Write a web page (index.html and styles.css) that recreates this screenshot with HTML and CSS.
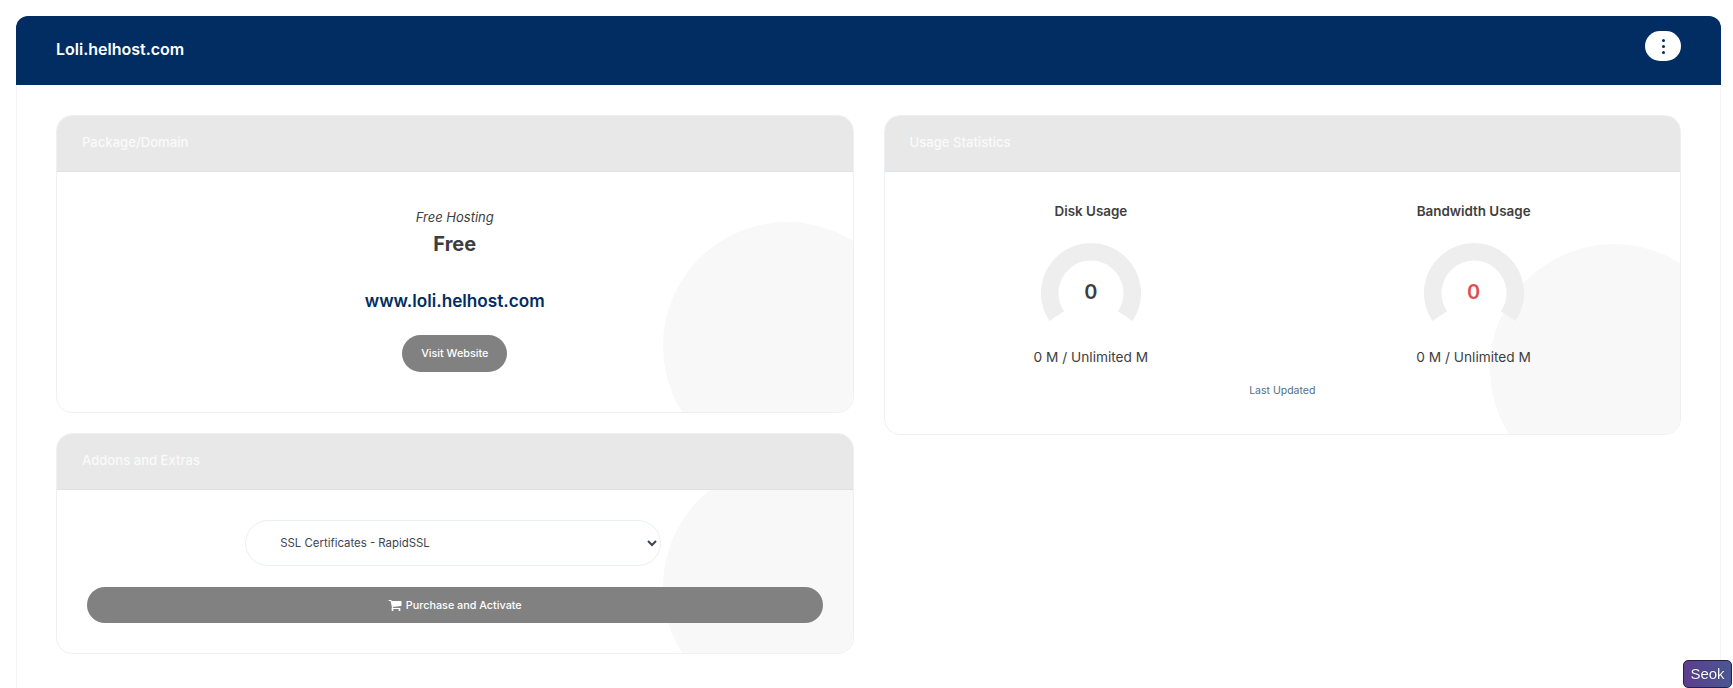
FILE: index.html
```html
<!DOCTYPE html>
<html lang="en">
<head>
<meta charset="utf-8">
<title>Loli.helhost.com</title>
<link rel="stylesheet" href="styles.css">
</head>
<body>
<main class="panel">
  <header class="panel-head">
    <h1 class="site-name">Loli.helhost.com</h1>
    <button class="more-btn" aria-label="More">
      <span class="dot"></span><span class="dot"></span><span class="dot"></span>
    </button>
  </header>
  <div class="panel-body">
    <div class="column">
      <section class="card card-package">
        <h2 class="card-title">Package/Domain</h2>
        <div class="card-content package">
          <em class="plan-group">Free Hosting</em>
          <strong class="plan-name">Free</strong>
          <a class="domain" href="#">www.loli.helhost.com</a>
          <a class="btn btn-visit" href="#">Visit Website</a>
        </div>
      </section>
      <section class="card card-addons">
        <h2 class="card-title">Addons and Extras</h2>
        <div class="card-content addons">
          <select class="addon-select">
            <option>SSL Certificates - RapidSSL</option>
          </select>
          <a class="btn btn-wide" href="#">
            <svg class="cart" viewBox="0 256 1792 1408" aria-hidden="true"><path d="M704 1536q0 52-38 90t-90 38-90-38-38-90 38-90 90-38 90 38 38 90zm896 0q0 52-38 90t-90 38-90-38-38-90 38-90 90-38 90 38 38 90zm128-1088v512q0 24-16.5 42.5t-40.5 21.5l-1044 122q13 60 13 70 0 16-24 64h920q26 0 45 19t19 45-19 45-45 19h-1024q-26 0-45-19t-19-45q0-11 8-31.5t16-36 21.5-40 15.5-29.5l-177-823h-204q-26 0-45-19t-19-45 19-45 45-19h256q16 0 28.5 6.5t19.5 15.5 13 24.5 8 26 5.5 29.5 4.5 26h1201q26 0 45 19t19 45z"/></svg>
            Purchase and Activate
          </a>
        </div>
      </section>
    </div>
    <div class="column">
      <section class="card card-usage">
        <h2 class="card-title">Usage Statistics</h2>
        <div class="card-content usage">
          <div class="stats">
            <div class="stat">
              <h3 class="stat-title">Disk Usage</h3>
              <div class="gauge">
                <svg viewBox="0 0 100 100" aria-hidden="true"><path class="gauge-track" d="M15.8 73.1A41.25 41.25 0 1 1 84.2 73.1"/></svg>
                <span class="gauge-value">0</span>
              </div>
              <p class="stat-text">0 M / Unlimited M</p>
            </div>
            <div class="stat">
              <h3 class="stat-title">Bandwidth Usage</h3>
              <div class="gauge">
                <svg viewBox="0 0 100 100" aria-hidden="true"><path class="gauge-track" d="M15.8 73.1A41.25 41.25 0 1 1 84.2 73.1"/></svg>
                <span class="gauge-value gauge-red">0</span>
              </div>
              <p class="stat-text">0 M / Unlimited M</p>
            </div>
          </div>
          <p class="updated">Last Updated</p>
        </div>
      </section>
    </div>
  </div>
</main>
<div class="badge">Seok</div>
</body>
</html>
```
FILE: styles.css
```css
* { box-sizing: border-box; }
html, body { height: 100%; overflow: hidden; }
body {
  margin: 0;
  padding: 16px 12px 0 16px;
  background: #fff;
  font-family: "Inter", "Liberation Sans", sans-serif;
  color: #3e3e3e;
}
.panel {
  border: 1px solid #f2f4f6;
  border-top: 0;
  border-radius: 12px 12px 0 0;
  min-height: 700px;
}
.panel-head {
  display: flex;
  align-items: flex-start;
  justify-content: space-between;
  height: 69px;
  margin: 0 -1px;
  padding: 15px 40px 0 40px;
  background: #012d62;
  border-radius: 12px 12px 0 0;
}
.site-name {
  margin: 8px 0 0;
  font-size: 16px;
  line-height: 20px;
  font-weight: 600;
  color: #fff;
}
.more-btn {
  display: flex;
  flex-direction: column;
  align-items: center;
  justify-content: center;
  gap: 3px;
  width: 36px;
  height: 30px;
  padding: 0;
  border: 0;
  border-radius: 15px;
  background: #fff;
}
.dot { width: 3px; height: 3px; border-radius: 50%; background: #012d62; }
.panel-body {
  display: grid;
  grid-template-columns: 1fr 1fr;
  gap: 30px;
  padding: 30px 39px 0;
  align-items: start;
}
.column { display: flex; flex-direction: column; gap: 20px; }
.card {
  position: relative;
  overflow: hidden;
  border: 1px solid #eef1f3;
  border-radius: 16px;
  background: #fff;
}
.card::after {
  content: "";
  position: absolute;
  right: -58px;
  bottom: -58px;
  width: 248px;
  height: 248px;
  border-radius: 50%;
  background: #f8f8f8;
}
.card-title {
  position: relative;
  z-index: 1;
  margin: 0;
  height: 56px;
  padding: 0 25px;
  line-height: 53px;
  font-size: 13.1px;
  font-weight: 500;
  color: #fafafa;
  background: #e8e8e8;
  border-bottom: 1px solid #dfe1e3;
}
.card-content { position: relative; z-index: 1; }
.package {
  height: 240px;
  padding-top: 35px;
  display: flex;
  flex-direction: column;
  align-items: center;
}
.plan-group { font-size: 13px; line-height: 20px; }
.plan-name { margin-top: 3px; font-size: 20px; line-height: 28px; font-weight: 700; }
.domain {
  margin-top: 31px;
  font-size: 17.2px;
  line-height: 24px;
  font-weight: 600;
  color: #012d62;
  text-decoration: none;
}
.btn {
  display: flex;
  align-items: center;
  justify-content: center;
  gap: 4px;
  height: 37px;
  border-radius: 19px;
  background: #818181;
  color: #fff;
  font-size: 10.8px;
  font-weight: 500;
  text-decoration: none;
}
.btn-visit { margin-top: 22px; width: 105px; }
.addons {
  height: 163px;
  padding: 30px 30px 0;
  display: flex;
  flex-direction: column;
  align-items: center;
}
.addon-select {
  width: 416px;
  height: 46px;
  margin-right: 3px;
  padding: 0 30px;
  border: 1px solid #e9eef3;
  border-radius: 23px;
  background: #fff;
  color: #3d4450;
  font-family: inherit;
  font-size: 11.4px;
}
.btn-wide { width: 100%; margin-top: 21px; height: 36px; }
.cart { width: 14px; height: 11px; fill: #fff; }
.usage { height: 262px; padding-top: 29px; }
.stats { display: grid; grid-template-columns: 1fr 1fr; padding: 0 15px; }
.stat { display: flex; flex-direction: column; align-items: center; }
.stat-title { margin: 0; font-size: 13.4px; line-height: 20px; font-weight: 600; }
.gauge { position: relative; width: 100px; height: 100px; margin-top: 22px; }
.gauge svg { display: block; width: 100%; height: 100%; }
.gauge-track { fill: none; stroke: #eeeeee; stroke-width: 17.5; }
.gauge-value {
  position: absolute;
  inset: 0;
  display: flex;
  align-items: center;
  justify-content: center;
  padding-bottom: 5px;
  font-family: "Lato", sans-serif;
  font-size: 21px;
  font-weight: 700;
}
.gauge-red { color: #de4f4f; }
.stat-text { margin: 4px 0 0; font-size: 13.7px; line-height: 20px; }
.updated { margin: 17px 0 0; text-align: center; font-size: 10.5px; line-height: 14px; color: #4f6f86; }
.badge {
  position: fixed;
  right: 1px;
  bottom: 0;
  width: 49px;
  height: 28px;
  border: 1px solid #23233c;
  border-radius: 5px;
  background: linear-gradient(90deg, #5c3e8e, #4a5792);
  color: #fff;
  font-family: "Liberation Sans", sans-serif;
  font-size: 15px;
  line-height: 26px;
  text-align: center;
  text-shadow: 0 0 1px #12122a;
}
```
